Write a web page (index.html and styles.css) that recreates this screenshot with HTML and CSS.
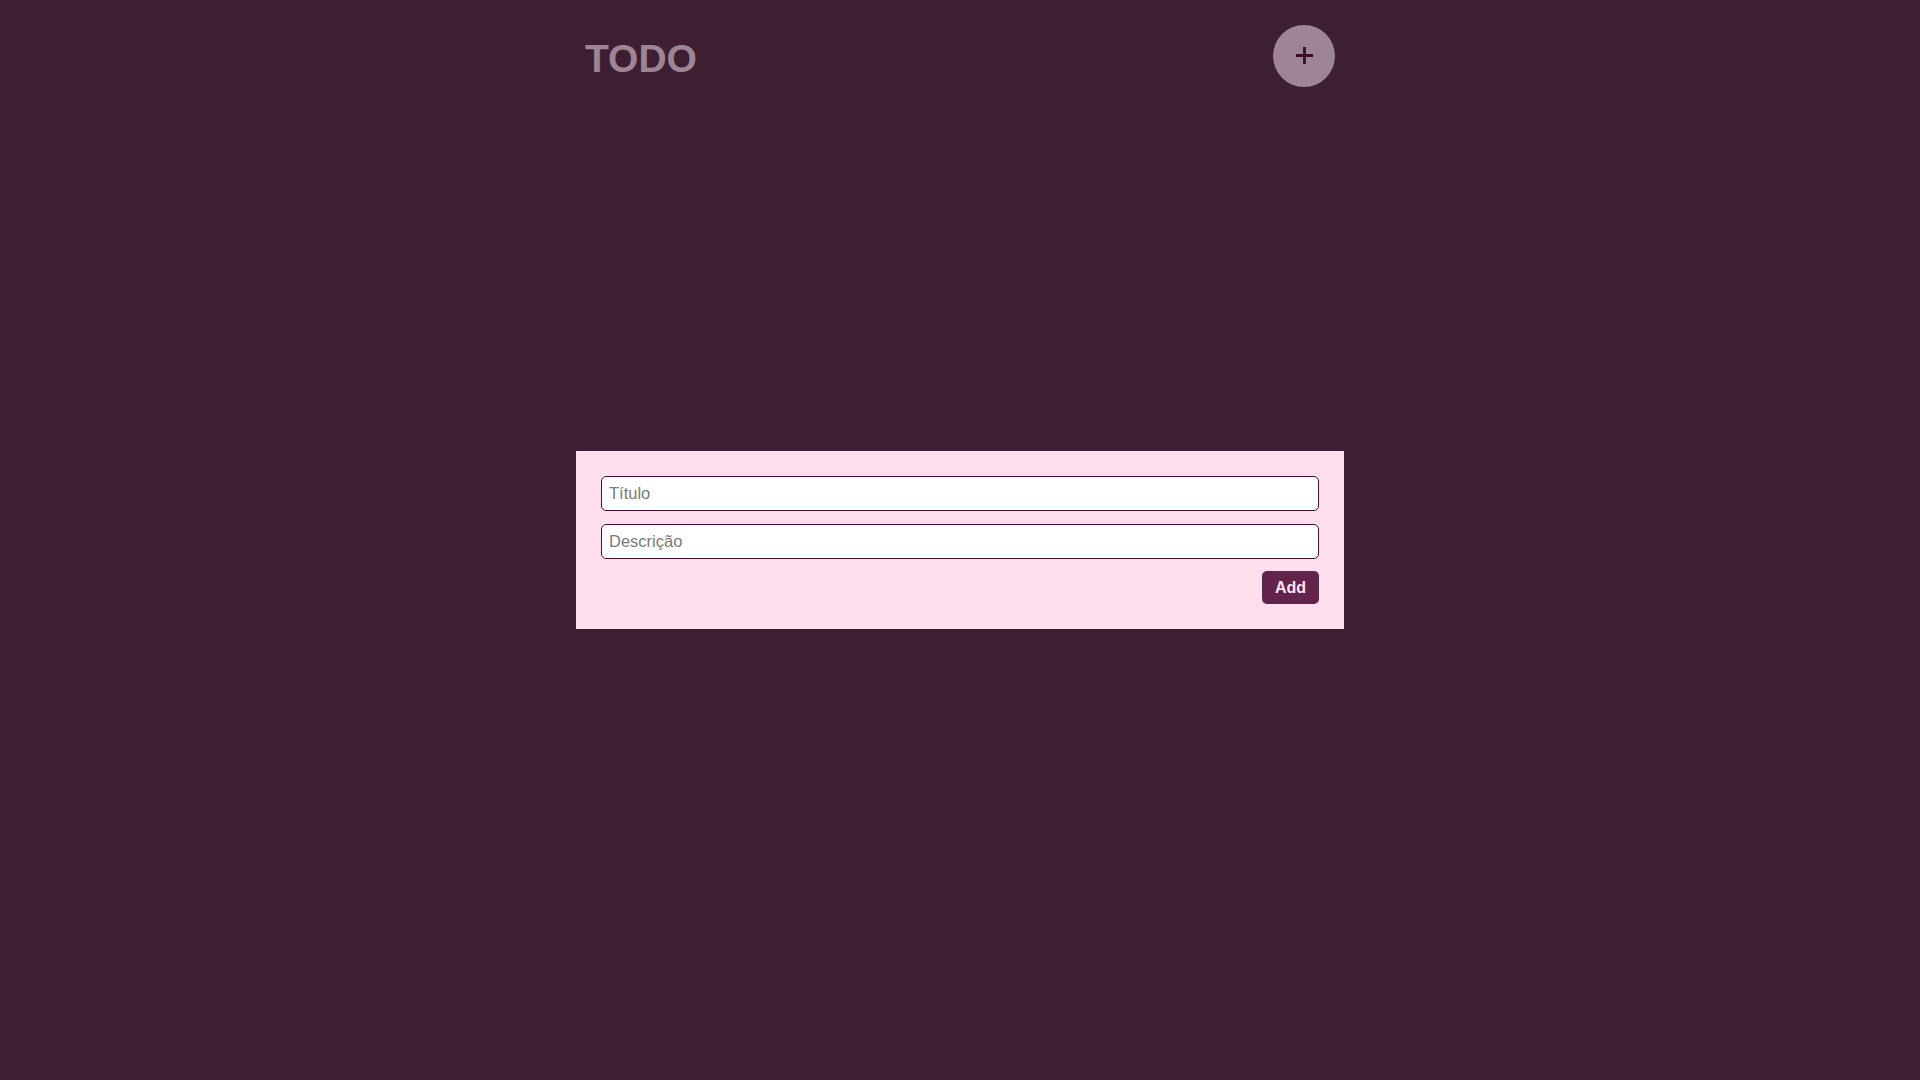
FILE: index.html
```html
<!DOCTYPE html>
<html lang="pt">
<head>
<meta charset="utf-8">
<title>TODO</title>
<link rel="stylesheet" href="styles.css">
</head>
<body>
<div class="page">
  <header class="header">
    <h1 class="logo">TODO</h1>
    <button class="add-toggle" aria-label="Adicionar">
      <svg width="20" height="20" viewBox="0 0 20 20"><path d="M10 1v18M1 10h18" stroke="#3a1028" stroke-width="3" fill="none"/></svg>
    </button>
  </header>
  <form class="panel">
    <input class="field" type="text" placeholder="Título">
    <input class="field" type="text" placeholder="Descrição">
    <div class="actions">
      <button type="button" class="add-btn">Add</button>
    </div>
  </form>
</div>
</body>
</html>
```
FILE: styles.css
```css
* { box-sizing: border-box; }
html, body { margin: 0; padding: 0; }
body {
  background: #3e1f31;
  font-family: "Liberation Sans", Arial, sans-serif;
}
.page {
  display: grid;
  height: 100vh;
  width: 768px;
  margin: 0 auto;
}
.header {
  grid-area: 1 / 1;
  align-self: start;
  display: flex;
  justify-content: space-between;
  align-items: flex-start;
  padding: 25px 9px 0 9px;
}
.logo {
  margin: 0;
  font-size: 39px;
  font-weight: bold;
  color: #9e8596;
  line-height: 62px;
  padding-top: 3px;
}
.add-toggle {
  width: 62px;
  height: 62px;
  border-radius: 50%;
  border: none;
  background: #9e8596;
  display: flex;
  align-items: center;
  justify-content: center;
  padding: 0 0 2px 0;
}
.add-toggle svg { width: 19px; height: 19px; display: block; }
.panel {
  grid-area: 1 / 1;
  align-self: center;
  background: #ffdfed;
  padding: 25px;
  display: flex;
  flex-direction: column;
}
.field {
  height: 35px;
  border: 1px solid #4d0f35;
  border-radius: 5px;
  background: #fff;
  font-family: "Liberation Sans", Arial, sans-serif;
  font-size: 16.5px;
  padding: 0 7px;
  margin: 0;
}
.field + .field { margin-top: 13px; }
.field::placeholder { color: #7a7a7a; }
.actions {
  display: flex;
  justify-content: flex-end;
  margin-top: 12px;
}
.add-btn {
  background: #63244b;
  color: #ffe4f0;
  border: none;
  border-radius: 5px;
  font-family: "Liberation Sans", Arial, sans-serif;
  font-weight: bold;
  font-size: 16px;
  line-height: 19px;
  padding: 7px 13px;
  height: 33px;
}
```
